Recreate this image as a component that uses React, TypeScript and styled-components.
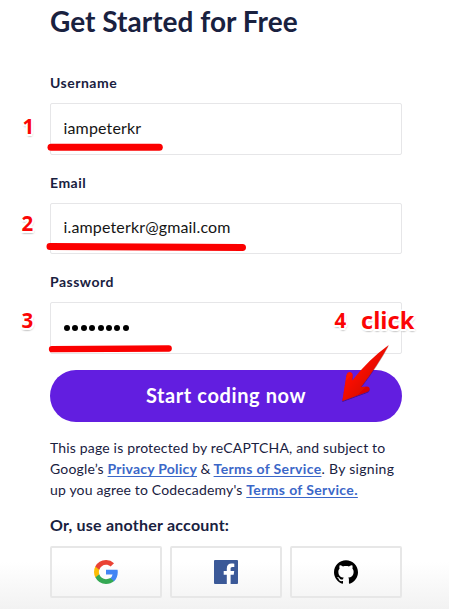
import React from 'react';
import styled, { createGlobalStyle } from 'styled-components';

const GlobalStyle = createGlobalStyle`
  * { box-sizing: border-box; }
  body { margin: 0; background: #fff; }
`;

const Page = styled.main`
  position: relative;
  width: 449px;
  height: 609px;
  overflow: hidden;
  padding: 3px 47px 0 50px;
  background: linear-gradient(to bottom, #fff 0, #fff 562px, #f2f2f2 609px);
  color: #19213f;
  font-family: Lato, 'Open Sans', sans-serif;
`;

const Form = styled.form`
  display: flex;
  flex-direction: column;
`;

const Title = styled.h1`
  margin: 0 0 34px;
  font-size: 28px;
  line-height: 36px;
  font-weight: 700;
  letter-spacing: 0.03px;
  white-space: nowrap;
`;

const Field = styled.div`
  display: flex;
  flex-direction: column;
  height: 99.5px;
`;

const Label = styled.label`
  height: 30.2px;
  font-size: 14px;
  line-height: 20px;
  font-weight: 700;
  letter-spacing: 0.5px;
`;

const Input = styled.input`
  width: 352px;
  height: 51.5px;
  padding: 0 12px 3px 12.5px;
  border: 1px solid #e6e6e8;
  border-radius: 2px;
  background: #fff;
  color: #151515;
  font: 16px/24px Lato, 'Open Sans', sans-serif;
  letter-spacing: 0.15px;
  outline: none;
`;

const PasswordBox = styled.div`
  display: flex;
  align-items: center;
  gap: 2.4px;
  width: 352px;
  height: 51.5px;
  padding: 1px 13px 0;
  border: 1px solid #e6e6e8;
  border-radius: 2px;
  background: #fff;
`;

const Dot = styled.span`
  width: 6px;
  height: 6px;
  border-radius: 50%;
  background: #000;
`;

const Submit = styled.button`
  width: 352px;
  height: 52px;
  margin-top: -1.5px;
  padding: 0 0 3px;
  border: 0;
  border-radius: 26px;
  background: #621ee0;
  color: #fff;
  font: 700 20px/26px Lato, 'Open Sans', sans-serif;
  letter-spacing: 0.6px;
`;

const Legal = styled.p`
  margin: 15.4px 0 0;
  font-size: 14px;
  line-height: 21px;
  letter-spacing: 0.17px;
  white-space: nowrap;
`;

const LegalLink = styled.a<{ $spacing?: number }>`
  color: #3b67c8;
  font-weight: 700;
  letter-spacing: ${(p) => p.$spacing ?? 0.36}px;
  text-decoration: underline;
  text-decoration-thickness: 1px;
  text-underline-offset: 2px;
  text-decoration-skip-ink: none;
`;

const Ampersand = styled.span`
  letter-spacing: -0.2px;
`;

const LooseText = styled.span`
  letter-spacing: 0.3px;
`;

const Alternative = styled.h2`
  margin: 12.6px 0 9px;
  font-size: 16px;
  line-height: 24px;
  font-weight: 700;
  letter-spacing: 0.22px;
`;

const Providers = styled.div`
  display: grid;
  grid-template-columns: repeat(3, 112px);
  gap: 8px;
`;

const Provider = styled.button`
  display: flex;
  align-items: center;
  justify-content: center;
  height: 52px;
  padding: 0;
  border: 2px solid #e7e7e7;
  border-radius: 2px;
  background: transparent;
`;

const Marks = styled.svg`
  position: absolute;
  inset: 0;
  pointer-events: none;
`;

const Note = styled.span<{ $x: number; $y: number; $size?: number }>`
  position: absolute;
  left: ${(p) => p.$x}px;
  top: ${(p) => p.$y}px;
  color: #fb0505;
  font: 700 ${(p) => p.$size ?? 20.5}px/28px 'Open Sans', 'Noto Sans', sans-serif;
  text-shadow: -2px 0 0 #fff, 2px 0 0 #fff, 0 -2px 0 #fff, 0 2px 0 #fff,
    -1.5px -1.5px 0 #fff, 1.5px 1.5px 0 #fff, 1.5px -1.5px 0 #fff, -1.5px 1.5px 0 #fff,
    0 2px 2px #888, 1px 2px 2px #aaa;
`;

const GoogleIcon = () => (
  <svg width="24" height="24" viewBox="0 0 24 24">
    <path fill="#4285f4" d="M23.76 12.27c0-.85-.08-1.67-.22-2.45H12v4.64h6.6a5.64 5.64 0 0 1-2.45 3.7v3.02h3.96c2.32-2.13 3.65-5.28 3.65-8.91z" />
    <path fill="#34a853" d="M12 24c3.24 0 5.96-1.07 7.95-2.91l-3.88-3.01c-1.08.72-2.45 1.16-4.07 1.16-3.13 0-5.78-2.11-6.73-4.96H1.29v3.09A12 12 0 0 0 12 24z" />
    <path fill="#fbbc05" d="M5.27 14.29A7.2 7.2 0 0 1 4.89 12c0-.8.14-1.57.38-2.29V6.62H1.29A12 12 0 0 0 0 12c0 1.94.47 3.76 1.29 5.38l3.98-3.09z" />
    <path fill="#ea4335" d="M12 4.75c1.77 0 3.35.61 4.6 1.8l3.42-3.42A11.5 11.5 0 0 0 12 0 12 12 0 0 0 1.29 6.62l3.98 3.09C6.22 6.86 8.87 4.75 12 4.75z" />
  </svg>
);

const FacebookIcon = () => (
  <svg width="24" height="24" viewBox="0 0 24 24">
    <rect width="24" height="24" rx="1" fill="#3b5998" />
    <path fill="#fff" d="M12.8 24v-9.3H9.7v-3.6h3.1V8.4c0-3.1 1.9-4.8 4.7-4.8 1.3 0 2.5.1 2.8.2v3.1h-1.9c-1.5 0-1.8.8-1.8 1.8v2.4h3.6l-.5 3.6h-3.1V24z" />
  </svg>
);

const GithubIcon = () => (
  <svg width="24" height="24" viewBox="0 0 24 24">
    <path d="M12 .297c-6.63 0-12 5.373-12 12 0 5.303 3.438 9.8 8.205 11.385.6.113.82-.258.82-.577 0-.285-.01-1.04-.015-2.04-3.338.724-4.042-1.61-4.042-1.61C4.422 18.07 3.633 17.7 3.633 17.7c-1.087-.744.084-.729.084-.729 1.205.084 1.838 1.236 1.838 1.236 1.07 1.835 2.809 1.305 3.495.998.108-.776.417-1.305.76-1.605-2.665-.3-5.466-1.332-5.466-5.93 0-1.31.465-2.38 1.235-3.22-.135-.303-.54-1.523.105-3.176 0 0 1.005-.322 3.3 1.23.96-.267 1.98-.399 3-.405 1.02.006 2.04.138 3 .405 2.28-1.552 3.285-1.23 3.285-1.23.645 1.653.24 2.873.12 3.176.765.84 1.23 1.91 1.23 3.22 0 4.61-2.805 5.625-5.475 5.92.42.36.81 1.096.81 2.22 0 1.606-.015 2.896-.015 3.286 0 .315.21.69.825.57C20.565 22.092 24 17.592 24 12.297c0-6.627-5.373-12-12-12" />
  </svg>
);

export default function App() {
  return (
    <Page>
      <GlobalStyle />
      <Form onSubmit={(e) => e.preventDefault()}>
        <Title>Get Started for Free</Title>
        <Field>
          <Label htmlFor="username">Username</Label>
          <Input id="username" defaultValue="iampeterkr" />
        </Field>
        <Field>
          <Label htmlFor="email">Email</Label>
          <Input id="email" defaultValue="i.ampeterkr@gmail.com" />
        </Field>
        <Field>
          <Label as="span">Password</Label>
          <PasswordBox aria-label="Password">
            {Array.from({ length: 8 }, (_, i) => <Dot key={i} />)}
          </PasswordBox>
        </Field>
        <Submit type="submit">Start coding now</Submit>
      </Form>
      <Legal>
        This page is protected by reCAPTCHA, and subject to<br />
        Google’s <LegalLink $spacing={0.22}>Privacy Policy</LegalLink><Ampersand> &amp; </Ampersand>
        <LegalLink>Terms of Service</LegalLink><LooseText>. By signing</LooseText><br />
        up you agree to Codecademy's <LegalLink>Terms of Service.</LegalLink>
      </Legal>
      <Alternative>Or, use another account:</Alternative>
      <Providers>
        <Provider aria-label="Google"><GoogleIcon /></Provider>
        <Provider aria-label="Facebook"><FacebookIcon /></Provider>
        <Provider aria-label="GitHub"><GithubIcon /></Provider>
      </Providers>
      <Marks width="449" height="609" viewBox="0 0 449 609">
        <defs>
          <linearGradient id="arrow" x1="0" y1="0" x2="1" y2="1">
            <stop offset="0.35" stopColor="#ff1205" />
            <stop offset="0.65" stopColor="#dc0505" />
          </linearGradient>
          <filter id="shade" x="-20%" y="-20%" width="140%" height="140%">
            <feDropShadow dx="0" dy="1" stdDeviation="0.7" floodOpacity="0.4" />
          </filter>
        </defs>
        <g stroke="#fb0000" strokeWidth="7" strokeLinecap="round">
          <path d="M51 147.2H159.3" />
          <path d="M50 246.5L242.5 247.6" />
          <path d="M52 349.2L168.7 348.5" strokeWidth="6.3" />
        </g>
        <path
          fill="url(#arrow)"
          filter="url(#shade)"
          d="M342.3 401L346.4 375Q347.3 371.7 350 372.1Q352.8 372.7 352.7 375.4L352.2 380.6Q368 360 388.7 345Q378 365 361 387L366.7 386.5Q369.8 386.8 369.7 389.3Q369.4 391.2 366.8 392Z"
        />
      </Marks>
      <Note $x={22.5} $y={111.5}>1</Note>
      <Note $x={21.5} $y={208.5}>2</Note>
      <Note $x={21.5} $y={306}>3</Note>
      <Note $x={334.5} $y={306}>4</Note>
      <Note $x={361} $y={305.5} $size={23.6}>click</Note>
    </Page>
  );
}
